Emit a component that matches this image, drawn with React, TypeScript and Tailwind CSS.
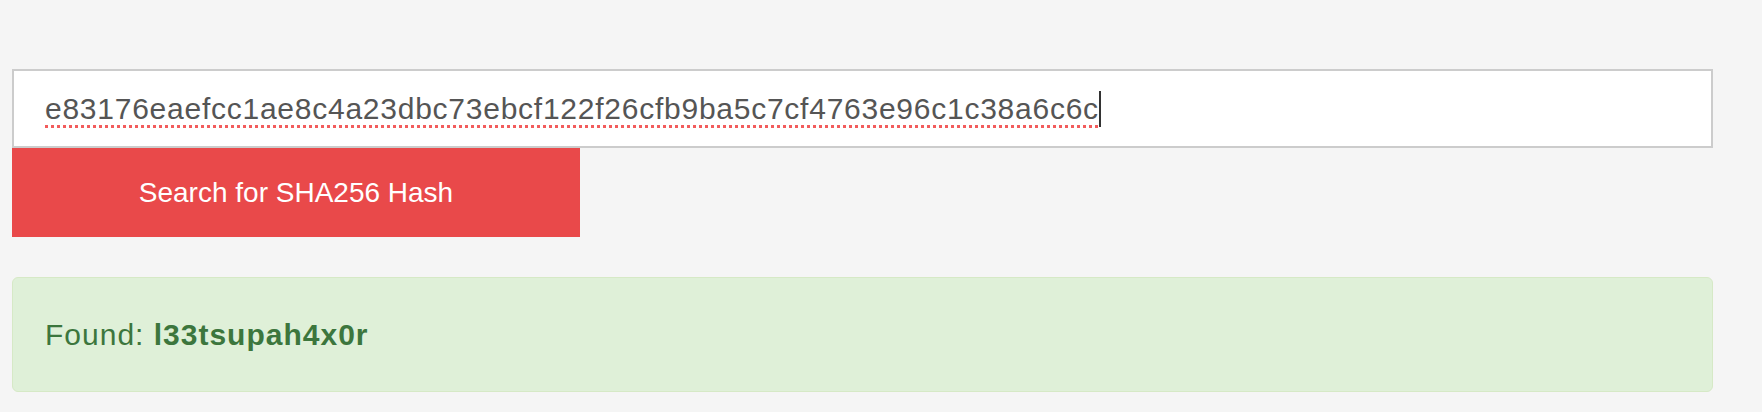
import React from "react";

const HASH =
  "e83176eaefcc1ae8c4a23dbc73ebcf122f26cfb9ba5c7cf4763e96c1c38a6c6c";

// --- MAIN COMPONENT ---
const App: React.FC = () => {
  return (
    <div className="min-h-[412px] w-full bg-[#f5f5f5] pt-[69px] pl-[12px] pr-[49px] font-['Liberation_Sans',Arial,sans-serif]">
      {/* Hash input */}
      <div
        role="textbox"
        className="flex h-[79px] items-center border-2 border-[#cccccc] bg-white pl-[31px] text-[30px] tracking-[0.75px] text-[#555555]">
        <span className="underline decoration-[#f25c5c] decoration-dotted decoration-[3px] underline-offset-[6px]">
          {HASH}
        </span>
        <span className="inline-block h-[36px] w-[2px] bg-[#333333]"></span>
      </div>

      {/* Submit */}
      <button className="block h-[89px] w-[568px] bg-[#e9494a] text-[28px] text-white">
        Search for SHA256 Hash
      </button>

      {/* Result */}
      <div className="mt-[40px] flex h-[115px] items-center rounded-[6px] border border-[#d6e9c6] bg-[#dff0d8] pl-[32px] text-[30px] tracking-[1px] text-[#3c763d]">
        <span>
          Found: <strong className="font-bold">l33tsupah4x0r</strong>
        </span>
      </div>
    </div>
  );
};

export default App;
